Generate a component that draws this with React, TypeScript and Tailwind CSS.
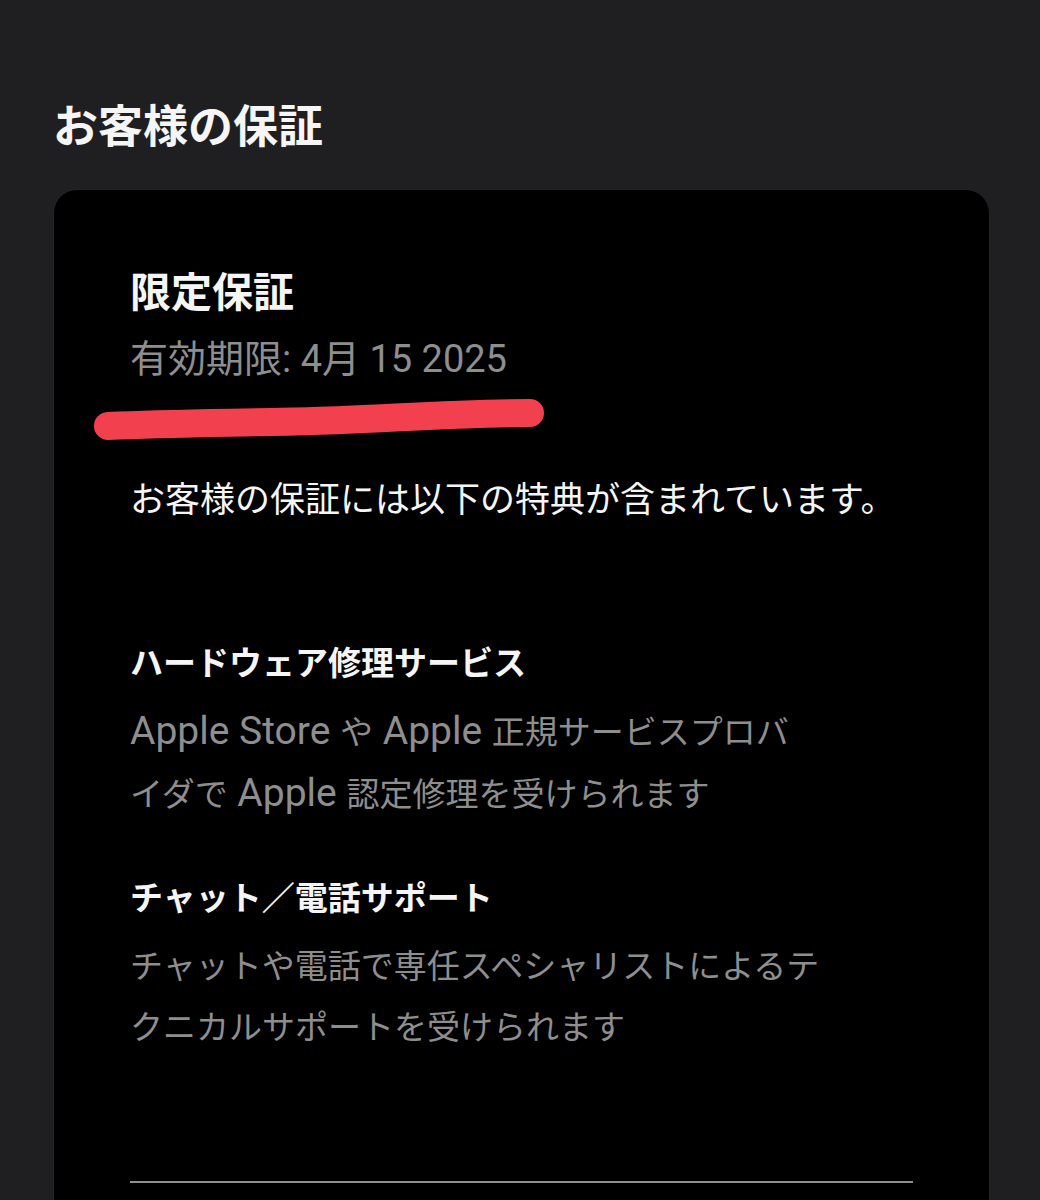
export default function App() {
    const font = { fontFamily: '"Roboto", "Noto Sans CJK JP", sans-serif' };

    return (
        <div style={font} className="h-[1200px] overflow-hidden bg-[#1f1f21] pl-[53px] pr-[50px] pt-[100px]">
            <h1 className="text-[45px] leading-[56px] font-bold text-[#f5f5f5]">お客様の保証</h1>

            {/* Warranty card */}
            <div className="mt-[33px] rounded-[24px] bg-black border border-[#242426] px-[76px] pt-[79px] pb-[120px]">
                <h2 className="text-[41px] leading-[48px] font-bold text-[#f5f5f5]">限定保証</h2>
                <p className="mt-[18px] text-[38px] leading-[48px] text-[#8e8e8e]">有効期限: 4月 15 2025</p>

                {/* hand-drawn marker underline */}
                <svg className="block mt-[13px] -ml-[38px]" width="470" height="48" viewBox="0 0 470 48">
                    <path
                        d="M16 30 C 80 27, 150 27, 221 25 S 360 17, 438 17"
                        fill="none"
                        stroke="#f3404f"
                        strokeWidth="28"
                        strokeLinecap="round"
                    />
                </svg>

                <p className="mt-[33px] text-[35px] leading-[48px] text-[#f5f5f5]">
                    お客様の保証には以下の特典が含まれています。
                </p>

                <h3 className="mt-[115px] text-[33px] leading-[48px] font-bold text-[#f5f5f5]">ハードウェア修理サービス</h3>
                <p className="mt-[14px] text-[33px] leading-[62px] text-[#8e8e8e] whitespace-nowrap">
                    <span className="text-[39px] leading-none">Apple Store </span>や<span className="text-[39px] leading-none"> Apple </span>正規サービスプロバ
                    <br />
                    イダで<span className="text-[39px] leading-none"> Apple </span>認定修理を受けられます
                </p>

                <h3 className="mt-[49px] text-[33px] leading-[48px] font-bold text-[#f5f5f5]">チャット／電話サポート</h3>
                <p className="mt-[13px] text-[33px] leading-[61px] text-[#8e8e8e] whitespace-nowrap">
                    チャットや電話で専任スペシャリストによるテ
                    <br />
                    クニカルサポートを受けられます
                </p>

                <div className="mt-[123px] h-[2px] bg-[#8e8e8e]" />
            </div>
        </div>
    );
}
